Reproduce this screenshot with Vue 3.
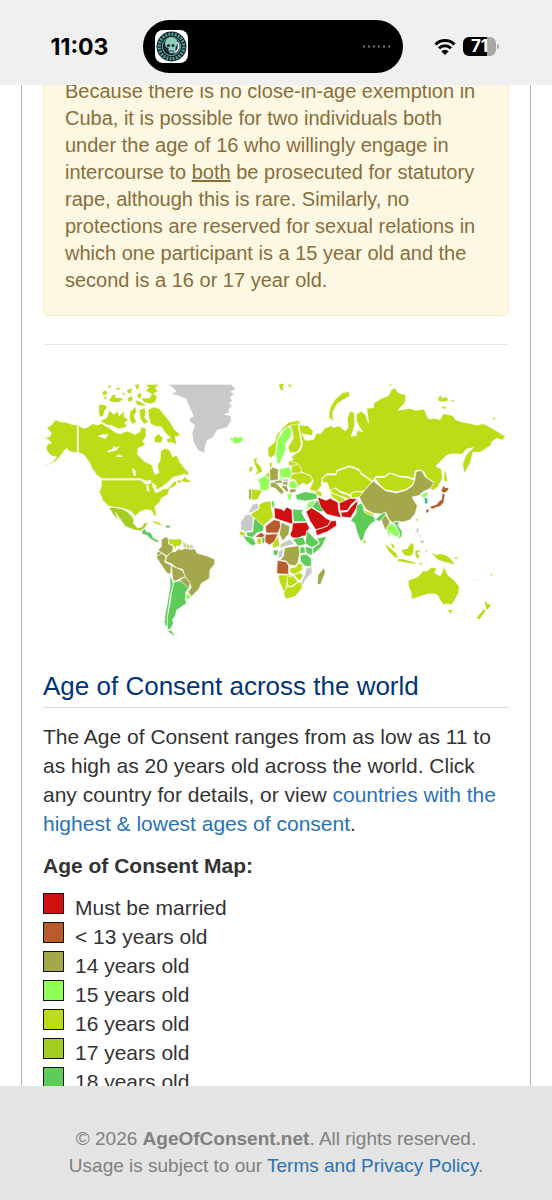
<script setup>
const legend = [
  { label: 'Must be married', tone: 'married' },
  { label: '< 13 years old', tone: 'a13' },
  { label: '14 years old', tone: 'a14' },
  { label: '15 years old', tone: 'a15' },
  { label: '16 years old', tone: 'a16' },
  { label: '17 years old', tone: 'a17' },
  { label: '18 years old', tone: 'a18' },
]

// Each region keeps its own local origin; shapes are [tone, path].
const regions = [
  {
    name: 'north-america', at: 'translate(40 375) scale(.33333)', shapes: [
      ['a16', 'M20 158L34 150L48 134L60 140L78 142L96 148L112 150V234L90 230L80 220L70 230L64 240L48 258L20 272L12 274L40 258L50 246L34 242L22 230L18 218L24 206L34 204L26 194L14 190L30 184L34 174Z'],
      ['a16', 'M115 150L130 160L140 158L158 146L176 150L184 144L196 152L210 160L226 172L240 176L262 168L285 178L300 170L303 155L318 160L318 185L308 198L316 210L294 220L292 238L312 258L336 270L344 298L356 294L352 270L360 258L362 228L376 220L390 226L398 246L410 240L420 262L442 290L426 300L400 306L388 318L366 336L350 344L338 326L318 318L300 311H186L170 300L156 280L148 262L130 238L115 234Z'],
      ['a16', 'M184 315H302L318 328L336 322L346 352L368 342L384 340L404 318L412 320L406 332L388 342L384 358L364 370L360 380L344 396L350 420L344 424L334 406L316 404L300 410L286 424L272 408L248 400L206 394L188 376L178 350L184 334Z'],
      ['a17', 'M206 396L228 398L248 402L262 410L276 424L282 436L280 445L292 458L306 456L312 444L322 446L314 460L300 468L280 464L256 454L240 432L226 412L236 436L220 420Z'],
      ['a16', 'M176 88L196 90L202 98L194 108L190 124L178 126L176 106Z'],
      ['a16', 'M180 138L200 128L208 106L222 118L232 108L238 122L254 106L252 124L266 135L254 142L262 156L236 162L216 152L200 150Z'],
      ['a16', 'M298 104L314 98L318 112L314 128L326 140L312 148L300 130Z'],
      ['a16', 'M324 104L340 96L358 100L368 114L390 140L404 164L420 178L412 186L406 184L410 210L396 202L382 204L380 192L392 188L376 174L364 156L346 154L332 146L326 126Z'],
      ['a16', 'M270 110L286 94L290 110L282 122L290 142L276 148L268 130Z'],
      ['a16', 'M342 188L356 176L370 190L362 204L344 202Z'],
      ['a16', 'M316 28H358L346 38L354 50L340 56L352 64L346 82L330 87L312 82L302 70L330 68L334 56L316 48L326 38Z'],
      ['speck16', 'M216 62L224 58L226 68L248 70L240 80L222 82L206 76L212 70ZM186 52L198 46L202 54L192 62ZM204 34L214 28L210 40ZM226 40L240 38L236 46ZM262 44L276 40L272 56L262 52ZM284 30L298 28L292 46ZM292 58L304 54L302 70L294 68ZM262 70L276 64L278 76L266 80ZM286 76L300 80L318 92L292 90ZM190 68L200 64L198 74ZM246 56L254 52L252 62Z'],
      ['speck16', 'M412 314L424 318L434 306L444 314L454 320L438 322L428 318L416 324ZM432 292L442 288L446 298L436 300Z'],
      ['water', 'M172 184L188 178L206 178L196 192L188 188ZM200 228L218 222L222 212L228 218L240 212L230 226L206 232ZM226 244L238 238L248 246L236 246ZM276 278L286 286L288 304L280 300ZM304 316L318 318L334 314L330 326L318 328ZM320 330L326 330L328 350L320 346ZM338 324L350 332L346 344L338 338ZM344 352L364 342L366 346L350 354Z'],
    ],
  },
  {
    name: 'greenland', at: 'translate(130 375) scale(.33333)', shapes: [
      ['none', 'M112 28H304L318 42L302 50L314 56L300 68L308 76L298 84L306 94L296 104L300 112L284 118L302 122L304 138L290 158L262 165L248 188L232 196L226 212L224 234L216 232L204 226L190 200L186 174L194 150L180 142L178 130L190 124L184 108L178 96L168 72L145 62L125 58L138 48L126 36Z'],
      ['a15', 'M300 184L308 190L316 184L324 188L334 184L340 194L330 204L312 207L308 198L302 196Z'],
    ],
  },
  {
    name: 'south-america', at: 'translate(120 500) scale(.33333)', shapes: [
      ['a14', 'M124 118L138 110L146 116L146 132L160 138L158 156L140 168L122 156L114 150L124 140Z'],
      ['a14', 'M110 158L118 154L126 160L112 170Z'],
      ['a14', 'M108 170L126 160L138 170L134 186L154 196L152 224L140 218L122 192Z'],
      ['a14', 'M136 184L140 170L154 156L168 154L176 146L186 150L196 144L214 148L224 146L232 160L262 168L284 178L284 192L270 210L268 236L244 250L236 268L214 290L204 276L214 262L206 244L194 228L188 208L170 204L156 192Z'],
      ['a14', 'M154 196L170 204L188 212L196 230L180 236L166 244L158 238Z'],
      ['a14', 'M180 238L196 232L210 248L208 264L196 262Z'],
      ['a16', 'M144 116L160 118L180 116L188 126L180 138L168 140L166 152L160 136L148 132Z'],
      ['none', 'M188 124L200 132L220 136L222 146L200 146L190 142Z'],
      ['a16', 'M200 134L210 134L208 146L200 144Z'],
      ['a18', 'M162 246L182 242L206 264L198 276L196 298L200 310L180 324L170 330L166 348L158 358L160 370L150 390L142 386L140 360L150 310L156 270Z'],
      ['a18', 'M150 228L156 238L160 252L154 274L148 310L142 350L142 380L136 378L134 350L142 310L150 260Z'],
      ['a15', 'M198 280L214 288L208 298L196 296Z'],
      ['speck18', 'M66 92L76 88L78 96L92 98L98 112L106 118L118 124L110 126L92 116L80 104L68 102ZM136 386L144 392L154 392L164 408L152 400ZM132 362L138 366L136 374Z'],
      ['speck16', 'M92 64L112 66L128 76L116 74ZM76 68L84 68L82 74Z'],
      ['speck18', 'M136 78L144 76L154 82L140 83Z'],
    ],
  },
  {
    name: 'europe', at: 'translate(220 375) scale(.33333)', shapes: [
      ['speck16', 'M176 30L184 26L192 28L188 36L190 42L184 48L180 38ZM204 28L214 30L210 40Z'],
      ['a16', 'M388 50L370 52L346 72L330 98L326 126L340 140L338 112L352 86L390 62Z'],
      ['a16', 'M144 218L164 202L168 184L182 164L206 142L236 136L242 146L222 152L208 152L184 168L172 192L166 240L150 250L144 238Z'],
      ['a15', 'M168 238L172 196L190 168L204 154L216 166L212 186L196 206L198 222L192 236L180 264L172 268Z'],
      ['a16', 'M210 152L234 146L238 170L244 210L232 232L210 234L204 216L220 190L216 164Z'],
      ['a16', 'M100 252L112 248L110 262L122 274L128 290L102 302L112 288L104 268Z'],
      ['a16', 'M88 278L98 272L98 288L86 292Z'],
      ['a16', 'M148 264L158 262L154 280L148 276Z'],
      ['a16', 'M94 342L128 346L120 360L112 374L96 376L92 364Z'],
      ['a14', 'M86 342L94 342L94 374L86 372Z'],
      ['a15', 'M112 314L136 302L150 316L146 344L130 348L118 342L120 326Z'],
      ['a16', 'M134 300L148 290L150 312Z'],
      ['a14', 'M148 284L160 276L176 284L174 300L176 314L150 318Z'],
      ['a15', 'M178 282L206 276L216 290L212 310L180 306Z'],
      ['a14', 'M150 324L168 320L174 330L192 348L186 360L166 340L152 336Z'],
      ['a14', 'M162 318L186 314L188 324L168 326Z'],
      ['a15', 'M174 310L188 308L196 312L180 316Z'],
      ['a14', 'M188 320L206 318L202 330L188 330Z'],
      ['none', 'M188 312L208 312L204 320L188 320Z'],
      ['a14', 'M182 332L200 332L206 346L200 352Z'],
      ['a15', 'M206 322L222 316L234 332L228 342L208 338Z'],
      ['a14', 'M208 342L230 342L226 352L210 354Z'],
      ['a15', 'M200 358L220 354L214 362L216 374L206 374Z'],
      ['a14', 'M214 242L230 242L228 252L216 252Z'],
      ['a16', 'M204 262L218 254L230 256L232 268L218 274L206 270Z'],
      ['a16', 'M214 274L236 266L248 284L240 296L214 294Z'],
      ['a16', 'M214 298L244 292L274 304L278 316L262 330L248 324L236 334L224 314L212 314Z'],
      ['a18', 'M226 360L256 350L290 356L292 372L256 378L230 374Z'],
      ['a16', 'M282 344L304 350L306 366L290 360Z'],
    ],
  },
  {
    name: 'north-asia', at: 'translate(320 375) scale(.33333)', shapes: [
      ['a16', 'M-64 150L-36 152L-20 168L-24 182L-46 178L-54 176L-44 196L-20 194L-10 174L2 176L14 160L34 152L40 158L56 152L76 168L84 158L82 130L90 108L104 114L104 150L94 184L108 182L112 166L128 170L118 156L110 140L108 120L122 108L136 118L146 144L140 100L160 98L162 84L185 70L205 62L214 44L224 38L236 54L258 60L256 82L234 106L270 100L286 106L312 102L326 132L344 130L360 134L370 116L400 122L406 134L424 140L470 150L490 146L510 156L530 168L556 184L548 196L530 190L516 200L512 212L480 232L458 232L452 262L432 296L428 266L438 240L460 218L440 222L426 238L400 236L382 240L366 254L348 274L364 282L368 310L352 338L338 346L326 338L342 322L320 308L312 290L298 284L286 288L282 312L262 304L240 304L220 296L206 294L194 304L168 304L158 318L124 294L116 282L90 272L50 286L48 296L20 296L6 308L6 330L-10 350L-32 344L-20 318L-28 302L-54 292L-58 276L-70 264L-84 262L-80 240L-60 228L-52 208Z'],
      ['a16', 'M6 312L20 300L48 300L52 288L90 275L116 286L124 298L156 320L146 332L132 348L104 350L88 358L60 348L46 338L38 348L28 344L22 324L8 322Z'],
      ['a16', 'M30 348L44 340L62 352L88 362L98 376L80 370L60 362L40 356Z'],
      ['a16', 'M28 352L60 364L84 378L58 382L36 366Z'],
      ['a16', 'M92 356L106 350L132 352L118 366L96 370Z'],
      ['water', 'M2 322L18 322L28 336L26 346L32 356L36 368L24 370L20 352L6 336Z'],
      ['a14', 'M118 366L134 346L146 332L160 318L178 332L196 347L228 354L258 346L278 332L284 316L288 290L304 286L316 306L342 324L328 342L312 348L296 362L276 366L288 386L292 392L286 415L270 435L248 441L230 439L218 443L206 433L198 413L182 417L160 415L138 403L126 383Z'],
      ['a16', 'M164 308L194 307L210 295L240 306L264 308L284 316L276 330L256 344L228 350L196 344L178 328Z'],
      ['speck16', 'M356 66L362 62L366 70L380 66L384 76L374 80L356 78ZM390 72L406 80L396 80ZM366 94L378 96L376 102L368 100ZM516 128L528 130L522 134ZM374 286L378 298L380 318L374 316ZM208 28L216 30L210 33Z'],
    ],
  },
  {
    name: 'africa', at: 'translate(230 485) scale(.33333)', shapes: [
      ['a16', 'M88 58L102 50L124 48L124 68L130 96L100 122L62 92L66 84L86 72Z'],
      ['none', 'M54 82L68 58L84 54L86 70L62 84Z'],
      ['none', 'M32 112L46 90L60 88L70 98L68 138L46 140L32 134Z'],
      ['a18', 'M124 48L132 48L134 64L128 72Z'],
      ['married', 'M132 68L154 72L162 78L170 66L186 74L188 118L158 108L134 100Z'],
      ['a18', 'M188 72L220 74L216 84L230 110H190Z'],
      ['married', 'M188 114L230 112L238 128L228 152L216 154L204 160L186 158L180 148L186 134Z'],
      ['a18', 'M188 162L220 156L228 178L204 184Z'],
      ['a18', 'M72 98L102 124L100 138L80 144L66 158L52 154L48 142L68 140Z'],
      ['a13', 'M106 124L132 104L150 108L152 126L144 144L108 144Z'],
      ['a14', 'M154 112L180 124L176 148L158 168L148 148Z'],
      ['a13', 'M106 148L144 146L134 170L118 180L104 170Z'],
      ['a13', 'M74 156L94 142L106 152L96 158Z'],
      ['a16', 'M28 138L44 142L46 154L30 150Z'],
      ['a18', 'M38 152L60 156L72 162L78 178L66 182L50 170Z'],
      ['a16', 'M80 160L94 160L94 178L82 178Z'],
      ['a18', 'M96 160L104 152L104 174L96 176Z'],
      ['a16', 'M128 176L146 152L148 184L128 190Z'],
      ['none', 'M150 178L180 162L194 178L166 184L152 190Z'],
      ['a18', 'M130 194L146 196L142 212L130 210Z'],
      ['none', 'M146 200L160 190L158 214L144 222Z'],
      ['a14', 'M150 226L160 214L164 188L206 182L210 200L204 232L196 242L178 240L168 228Z'],
      ['a13', 'M142 226L168 230L176 242V268L140 266Z'],
      ['a18', 'M230 136L250 156L268 174L246 188L226 176Z'],
      ['a18', 'M262 160L290 154L276 184L250 208L248 190L268 176Z'],
      ['a18', 'M226 184L248 190L246 212L228 204Z'],
      ['a18', 'M210 186L224 186L226 204L210 206Z'],
      ['a18', 'M210 210L230 208L244 220L244 244L226 244L212 230Z'],
      ['none', 'M228 250L246 246L246 264L226 284L218 304L214 290L224 270Z'],
      ['a16', 'M180 250L198 246L204 234L218 238L216 256L196 268L180 264Z'],
      ['a16', 'M192 270L210 262L220 272L208 288Z'],
      ['a16', 'M144 270L184 270L170 292L170 310L162 322L148 290Z'],
      ['a16', 'M172 276L190 272L204 290L184 304L172 302Z'],
      ['a16', 'M162 322L172 304L186 306L204 292L216 292L216 310L196 334L170 342L162 332Z'],
      ['a14', 'M282 248L286 262L272 298L262 298L264 270Z'],
      ['married', 'M228 80L244 68L270 84L288 100L304 108L318 106L320 122L292 140L260 152L256 132L240 108Z'],
      ['border', 'M258 134L280 128L294 122L302 108'],
      ['a18', 'M246 66L260 46L270 52L284 80L268 80Z'],
      ['a15', 'M230 64L236 50L256 46L246 64L232 74Z'],
      ['married', 'M262 36L288 46L300 40L324 52L326 76L334 98L306 92L290 88L272 66Z'],
      ['married', 'M328 54L360 40L382 42L364 58L352 76L330 78Z'],
      ['married', 'M332 82L352 80L366 62L384 46L382 66L362 98L336 96Z'],
    ],
  },
  {
    name: 'south-asia-oceania', at: 'translate(350 460) scale(.33333)', shapes: [
      ['a18', 'M2 182L18 160L20 136L36 128L42 152L72 168L76 182L60 194L46 216L40 238L32 244L22 220L14 190Z'],
      ['a16', 'M42 150L72 162L70 170L44 158Z'],
      ['a18', 'M76 178L92 164L104 156L108 164L96 180L86 184Z'],
      ['a14', 'M94 180L106 164L120 186L114 200L108 212L102 202Z'],
      ['a15', 'M110 200L124 190L140 204L150 218L142 232L128 226L120 216L118 240L128 258L120 246L114 224Z'],
      ['a18', 'M130 186L148 184L144 196L156 214L156 228L142 240L150 222L140 202Z'],
      ['speck16', 'M40 238L48 244L46 250L42 250ZM198 178L204 176L202 186Z'],
      ['speck15', 'M212 106L232 96L234 104L222 114Z'],
      ['speckTeal', 'M224 114L231 114L233 128L225 132Z'],
      ['speck13', 'M280 78L286 84L296 84L292 92L284 98L274 94ZM278 98L284 106L280 128L270 138L258 142L246 146L240 140L260 134L266 126L276 118ZM228 150L236 148L236 154L230 160Z'],
      ['speck16', 'M284 28L288 42L292 62L284 66Z'],
      ['speck16', 'M104 252L116 260L138 280L144 294L132 290L116 272ZM142 298L160 298L196 308L196 312L144 303ZM122 248L132 256L134 266L126 262ZM154 270L172 266L184 248L192 258L188 282L180 288L164 286ZM196 272L214 270L202 278L208 290L202 296L196 284ZM244 278L260 286L268 282L284 284L302 296L314 314L296 308L284 306L262 298ZM206 310L220 308L212 314ZM226 268L232 274L230 280ZM310 294L324 292L320 298ZM420 342L430 344L424 348Z'],
      ['speckNone', 'M200 204L206 206L204 218L200 218ZM206 224L214 228L210 232ZM212 240L222 242L220 250L212 248ZM370 356L378 360L374 361Z'],
      ['a16', 'M174 362L204 350L220 332L230 334L244 322L260 324L254 338L270 348L278 334L280 316L294 346L310 358L328 380L326 400L306 434L292 432L280 434L270 420L264 408L256 402L234 402L204 412L184 418L184 400L176 380Z'],
      ['speck16', 'M294 450H308L302 461ZM404 420L412 432L424 434L414 448L408 446ZM402 446L406 454L388 478L380 474Z'],
    ],
  },
]
</script>

<template>
  <div class="screen">
    <header class="status">
      <time class="clock">11:03</time>
      <div class="island">
        <svg class="app-icon" viewBox="0 0 33 33" aria-label="App in use">
          <rect width="33" height="33" rx="8" fill="#fff" />
          <circle cx="16.5" cy="16.5" r="15" fill="#111f2b" />
          <circle cx="16.5" cy="16.5" r="12.3" fill="none" stroke="#4f9c8c" stroke-width="3.4" stroke-dasharray="2 1.2" />
          <circle cx="16.5" cy="16.5" r="9.2" fill="#10283a" stroke="#b9d6d2" stroke-width=".7" />
          <path d="M10 14c0-5 4-7 7-6.500 4 .5 6 3 5 7l-1.500 3.500v4l-5 1.500-2-2.500v-3l-2.500-1z" fill="#8fcdbd" />
          <path d="M21 11c3 4 2 9-3 13 5-1 8-6 6-11z" fill="#dfeff0" />
          <circle cx="13.500" cy="15.500" r="1.600" fill="#10283a" />
          <circle cx="18" cy="15.500" r="1.500" fill="#10283a" />
          <path d="M14 21h5" stroke="#10283a" stroke-width=".8" />
        </svg>
        <svg class="dots" viewBox="0 0 28 3" aria-hidden="true">
          <path d="M1 1.500H28" stroke="#777" stroke-width="2" stroke-dasharray="2 3" />
        </svg>
      </div>
      <div class="signals">
        <svg class="wifi" viewBox="0 0 22 18" aria-label="Wi-Fi">
          <g fill="none" stroke="#000" stroke-width="3">
            <path d="M1.500 6.500a13.500 13.500 0 0 1 19 0" />
            <path d="M5 10.200a8.500 8.500 0 0 1 12 0" />
          </g>
          <path d="M7.300 13.200a5.300 5.300 0 0 1 7.400 0L11 17z" />
        </svg>
        <div class="battery"><span>71</span></div>
      </div>
    </header>

    <main class="viewport">
      <article class="page">
        <p class="alert">
          Because there is no close-in-age exemption in Cuba, it is possible for two individuals both
          under the age of 16 who willingly engage in intercourse to <u>both</u> be prosecuted for
          statutory rape, although this is rare. Similarly, no protections are reserved for sexual
          relations in which one participant is a 15 year old and the second is a 16 or 17 year old.
        </p>
        <hr />
        <svg class="map" viewBox="43 374 466 270" role="img" aria-label="World map">
          <g v-for="r in regions" :key="r.name" :transform="r.at">
            <path v-for="(s, i) in r.shapes" :key="i" :class="s[0]" :d="s[1]" />
          </g>
        </svg>
        <h2>Age of Consent across the world</h2>
        <p class="intro">
          The Age of Consent ranges from as low as 11 to as high as 20 years old across the world.
          Click any country for details, or view
          <a href="#">countries with the highest &amp; lowest ages of consent</a>.
        </p>
        <p class="caption"><strong>Age of Consent Map:</strong></p>
        <ul class="legend">
          <li v-for="item in legend" :key="item.tone">
            <i :class="['swatch', item.tone]"></i>{{ item.label }}
          </li>
        </ul>
      </article>
    </main>

    <footer class="footer">
      <p>© 2026 <strong>AgeOfConsent.net</strong>. All rights reserved.</p>
      <p>Usage is subject to our <a href="#">Terms and Privacy Policy</a>.</p>
    </footer>
  </div>
</template>

<style>
body { margin: 0; background: #fff; }
</style>

<style scoped>
.screen {
  display: flex;
  flex-direction: column;
  height: 100vh;
  overflow: hidden;
  font-family: "Liberation Sans", Arial, sans-serif;
  color: #333;
}
.status {
  flex: none;
  display: grid;
  grid-template-columns: 143fr 260px 149fr;
  align-items: center;
  box-sizing: border-box;
  height: 85px;
  padding: 8px 0 0;
  background: #f0f0f0;
  color: #000;
}
.clock {
  justify-self: center;
  padding-left: 16px;
  font: 700 23px/28px Inter, sans-serif;
}
.island {
  display: flex;
  align-items: center;
  justify-content: space-between;
  box-sizing: border-box;
  height: 53px;
  padding: 0 13px 0 12px;
  border-radius: 27px;
  background: #000;
}
.app-icon { width: 33px; height: 33px; }
.dots { width: 28px; height: 3px; }
.signals {
  display: flex;
  align-items: center;
  gap: 7px;
  padding-left: 31px;
}
.wifi { width: 22px; height: 18px; }
.battery {
  position: relative;
  width: 33px;
  height: 19px;
  border-radius: 6px;
  background: linear-gradient(90deg, #000 72%, #a8a8a8 72%);
  color: #fff;
  font: 700 17px/19px Inter, sans-serif;
  text-align: center;
}
.battery::after {
  content: "";
  position: absolute;
  left: 34px;
  top: 7px;
  width: 2px;
  height: 5px;
  border-radius: 0 2px 2px 0;
  background: #a8a8a8;
}
.viewport {
  flex: 1;
  min-height: 0;
  overflow: hidden;
  padding: 0 21px;
}
.page {
  padding: 0 21px;
  border: solid #b4b4b4;
  border-width: 0 1px;
}
.alert {
  margin: -29px 0 28px;
  padding: 21px;
  border: 1px solid #faebcc;
  border-radius: 5px;
  background: #fcf8e3;
  color: #8a6d3b;
  font-size: 20px;
  line-height: 27px;
}
hr {
  margin: 0 0 29px;
  border: 0;
  border-top: 1px solid #e8e8e8;
}
.map { display: block; width: 100%; }
.map path { stroke: #fff; stroke-width: 2; stroke-linejoin: round; }
.map .a16, .map .speck16 { fill: #bddc18; }
.map .a17 { fill: #a3cd20; }
.map .a14 { fill: #a5a84a; }
.map .a15, .map .speck15 { fill: #90ff58; }
.map .a18, .map .speck18 { fill: #5fcc5a; }
.map .a13, .map .speck13 { fill: #b85c2e; }
.map .married { fill: #cf1010; }
.map .none, .map .speckNone { fill: #c9c9c9; }
.map .speckTeal { fill: #1fc39a; }
.map .water { fill: #fff; stroke: none; }
.map .border { fill: none; stroke-width: 3; }
.map [class^="speck"] { stroke: none; }
h2 {
  margin: 26px 0 14px;
  padding-bottom: 5px;
  border-bottom: 1px solid #ddd;
  color: #003478;
  font-size: 26px;
  font-weight: 400;
  line-height: 32px;
}
.intro, .caption {
  margin: 0 0 13px;
  font-size: 21px;
  line-height: 29px;
}
a { color: #2a72b5; text-decoration: none; }
.legend {
  margin: 0;
  padding: 0;
  list-style: none;
  font-size: 21px;
  line-height: 29px;
}
.legend li { display: flex; gap: 11px; }
.swatch {
  box-sizing: border-box;
  width: 21px;
  height: 21px;
  border: 1px solid #111;
}
.swatch.married { background: #cf1010; }
.swatch.a13 { background: #b85c2e; }
.swatch.a14 { background: #a5a84a; }
.swatch.a15 { background: #90ff58; }
.swatch.a16 { background: #bddc18; }
.swatch.a17 { background: #a3cd20; }
.swatch.a18 { background: #5fcc5a; }
.footer {
  flex: none;
  box-sizing: border-box;
  height: 114px;
  padding-top: 39px;
  background: #e4e4e4;
  color: #808080;
  font-size: 19px;
  line-height: 27px;
  text-align: center;
}
.footer p { margin: 0; }
</style>
